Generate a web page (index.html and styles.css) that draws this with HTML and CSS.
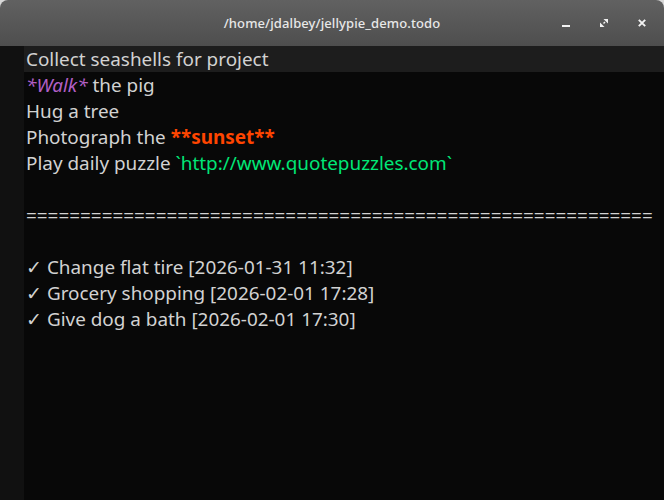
FILE: index.html
```html
<!DOCTYPE html>
<html>
<head>
<meta charset="utf-8">
<link rel="stylesheet" href="styles.css">
</head>
<body>
<div class="window">
  <header class="titlebar">
    <div class="title">/home/jdalbey/jellypie_demo.todo</div>
    <div class="controls">
      <span class="btn"><svg width="8" height="8" viewBox="0 0 8 8"><rect x="0" y="6" width="8" height="2" fill="#f2f2f2"/></svg></span>
      <span class="btn"><svg width="8" height="8" viewBox="0 0 8 8"><path d="M3.5 0H8V4.5Z M4.5 2.5L5.5 3.5 4 5 3 4Z" fill="#f2f2f2"/><path d="M0 3.5V8H4.5Z" fill="#f2f2f2"/></svg></span>
      <span class="btn"><svg width="8" height="8" viewBox="0 0 8 8"><path d="M0.8 0.8L7.2 7.2M7.2 0.8L0.8 7.2" stroke="#f2f2f2" stroke-width="1.9"/></svg></span>
    </div>
  </header>
  <main class="editor">
    <div class="gutter"></div>
    <div class="text">
      <div class="line current">Collect seashells for project</div>
      <div class="line"><span class="em">*Walk*</span> the pig</div>
      <div class="line">Hug a tree</div>
      <div class="line">Photograph the <span class="strong">**sunset**</span></div>
      <div class="line">Play daily puzzle <span class="code">`http://www.quotepuzzles.com`</span></div>
      <div class="line"></div>
      <div class="line">==========================================================</div>
      <div class="line"></div>
      <div class="line"><span class="check">✓</span> Change flat tire [2026-01-31 11:32]</div>
      <div class="line"><span class="check">✓</span> Grocery shopping [2026-02-01 17:28]</div>
      <div class="line"><span class="check">✓</span> Give dog a bath [2026-02-01 17:30]</div>
    </div>
  </main>
</div>
</body>
</html>
```
FILE: styles.css
```css
* { box-sizing: border-box; }
html, body { margin: 0; padding: 0; background: #d8d8d8; }
body { width: 664px; height: 500px; overflow: hidden; font-family: "Noto Sans", sans-serif; }
.window { width: 664px; height: 500px; display: flex; flex-direction: column; }
.titlebar {
  height: 46px;
  flex: none;
  background: linear-gradient(#616161, #4e4e4e);
  border-radius: 8px 8px 0 0;
  display: flex;
  align-items: center;
  justify-content: center;
  position: relative;
  color: #e8e8e8;
}
.title { font-size: 13px; font-weight: 500; letter-spacing: 0.1px; }
.controls {
  position: absolute;
  right: 18px;
  top: 19px;
  display: flex;
  gap: 30px;
}
.btn { width: 8px; height: 8px; display: block; }
.btn svg { display: block; }
.editor { flex: 1; display: flex; background: #080808; }
.gutter { width: 24px; background: #111111; flex: none; }
.text { flex: 1; color: #d2d2d2; font-size: 18.9px; }
.line { height: 26px; line-height: 26px; padding-left: 2px; white-space: pre; }
.line.current { background: #1d1d1d; }
.em { color: #b25fc6; font-style: italic; }
.strong { color: #ff4500; font-weight: bold; }
.code { color: #00e676; }
.check { font-weight: 300; }
```
